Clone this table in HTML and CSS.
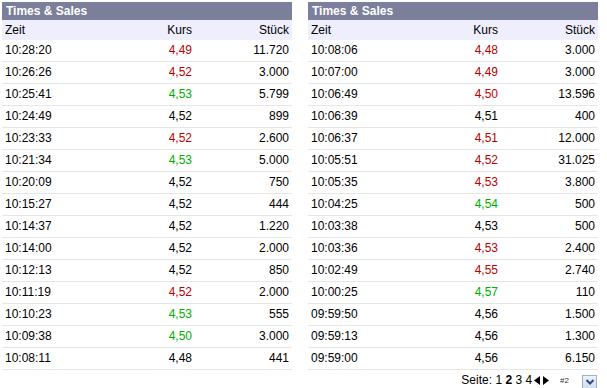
FILE: index.html
```html
<!DOCTYPE html>
<html lang="de">
<head>
<meta charset="utf-8">
<title>Times &amp; Sales</title>
<link rel="stylesheet" href="styles.css">
</head>
<body>
<div class="page">
  <section class="panel">
    <div class="title">Times &amp; Sales</div>
    <div class="row head"><span>Zeit</span><span class="num">Kurs</span><span class="num">Stück</span></div>
    <div class="row"><span>10:28:20</span><span class="num down">4,49</span><span class="num">11.720</span></div>
    <div class="row"><span>10:26:26</span><span class="num down">4,52</span><span class="num">3.000</span></div>
    <div class="row"><span>10:25:41</span><span class="num up">4,53</span><span class="num">5.799</span></div>
    <div class="row"><span>10:24:49</span><span class="num">4,52</span><span class="num">899</span></div>
    <div class="row"><span>10:23:33</span><span class="num down">4,52</span><span class="num">2.600</span></div>
    <div class="row"><span>10:21:34</span><span class="num up">4,53</span><span class="num">5.000</span></div>
    <div class="row"><span>10:20:09</span><span class="num">4,52</span><span class="num">750</span></div>
    <div class="row"><span>10:15:27</span><span class="num">4,52</span><span class="num">444</span></div>
    <div class="row"><span>10:14:37</span><span class="num">4,52</span><span class="num">1.220</span></div>
    <div class="row"><span>10:14:00</span><span class="num">4,52</span><span class="num">2.000</span></div>
    <div class="row"><span>10:12:13</span><span class="num">4,52</span><span class="num">850</span></div>
    <div class="row"><span>10:11:19</span><span class="num down">4,52</span><span class="num">2.000</span></div>
    <div class="row"><span>10:10:23</span><span class="num up">4,53</span><span class="num">555</span></div>
    <div class="row"><span>10:09:38</span><span class="num up">4,50</span><span class="num">3.000</span></div>
    <div class="row"><span>10:08:11</span><span class="num">4,48</span><span class="num">441</span></div>
  </section>
  <section class="panel">
    <div class="title">Times &amp; Sales</div>
    <div class="row head"><span>Zeit</span><span class="num">Kurs</span><span class="num">Stück</span></div>
    <div class="row"><span>10:08:06</span><span class="num down">4,48</span><span class="num">3.000</span></div>
    <div class="row"><span>10:07:00</span><span class="num down">4,49</span><span class="num">3.000</span></div>
    <div class="row"><span>10:06:49</span><span class="num down">4,50</span><span class="num">13.596</span></div>
    <div class="row"><span>10:06:39</span><span class="num">4,51</span><span class="num">400</span></div>
    <div class="row"><span>10:06:37</span><span class="num down">4,51</span><span class="num">12.000</span></div>
    <div class="row"><span>10:05:51</span><span class="num down">4,52</span><span class="num">31.025</span></div>
    <div class="row"><span>10:05:35</span><span class="num down">4,53</span><span class="num">3.800</span></div>
    <div class="row"><span>10:04:25</span><span class="num up">4,54</span><span class="num">500</span></div>
    <div class="row"><span>10:03:38</span><span class="num">4,53</span><span class="num">500</span></div>
    <div class="row"><span>10:03:36</span><span class="num down">4,53</span><span class="num">2.400</span></div>
    <div class="row"><span>10:02:49</span><span class="num down">4,55</span><span class="num">2.740</span></div>
    <div class="row"><span>10:00:25</span><span class="num up">4,57</span><span class="num">110</span></div>
    <div class="row"><span>09:59:50</span><span class="num">4,56</span><span class="num">1.500</span></div>
    <div class="row"><span>09:59:13</span><span class="num">4,56</span><span class="num">1.300</span></div>
    <div class="row"><span>09:59:00</span><span class="num">4,56</span><span class="num">6.150</span></div>
    <div class="pager">
      <span class="pages">Seite: 1 <b>2</b> 3 4</span>
      <span class="arrows">
        <svg width="6" height="9" viewBox="0 0 6 9"><path d="M6 0V9L0 4.5Z" fill="#000"/></svg>
        <svg width="6" height="9" viewBox="0 0 6 9"><path d="M0 0V9L6 4.5Z" fill="#000"/></svg>
      </span>
      <span class="hash">#2</span>
      <span class="drop"><svg width="10" height="8" viewBox="0 0 10 8"><path d="M1.5 2L5 5.5L8.5 2" fill="none" stroke="#2f4a7e" stroke-width="2"/></svg></span>
    </div>
  </section>
</div>
</body>
</html>
```
FILE: styles.css
```css
html, body {
  margin: 0;
  padding: 0;
  background: #fff;
}
body {
  font-family: "Liberation Sans", Arial, sans-serif;
  font-size: 12px;
  color: #000;
}
.page {
  display: flex;
  gap: 16px;
  padding: 2px 0 0 2px;
}
.panel {
  width: 290px;
}
.title {
  height: 18px;
  line-height: 18px;
  background: #7b7f9b;
  color: #fff;
  font-weight: bold;
  padding-left: 4px;
}
.row {
  display: grid;
  grid-template-columns: 1fr 80px 97px;
  height: 21px;
  line-height: 21px;
  padding: 0 3px;
  border-bottom: 1px solid #e6e6e6;
}
.row.head {
  height: 20px;
  line-height: 21px;
  background: #eeeefc;
  border-bottom: none;
}
.num {
  text-align: right;
}
.down { color: #c00000; }
.up { color: #00b000; }
.pager {
  display: flex;
  justify-content: flex-end;
  align-items: center;
  height: 18px;
  padding-top: 1px;
  padding-right: 1px;
}
.pages b {
  font-weight: bold;
}
.arrows {
  display: inline-flex;
  gap: 3px;
  margin-left: 2px;
}
.hash {
  font-size: 8px;
  color: #333;
  margin-left: 11px;
}
.drop {
  display: inline-flex;
  align-items: center;
  justify-content: center;
  width: 13px;
  height: 13px;
  margin-left: 13px;
  margin-top: 4px;
  border: 1px solid #9fb0c9;
  background: linear-gradient(#eef3fb, #cfdcef);
}
```
